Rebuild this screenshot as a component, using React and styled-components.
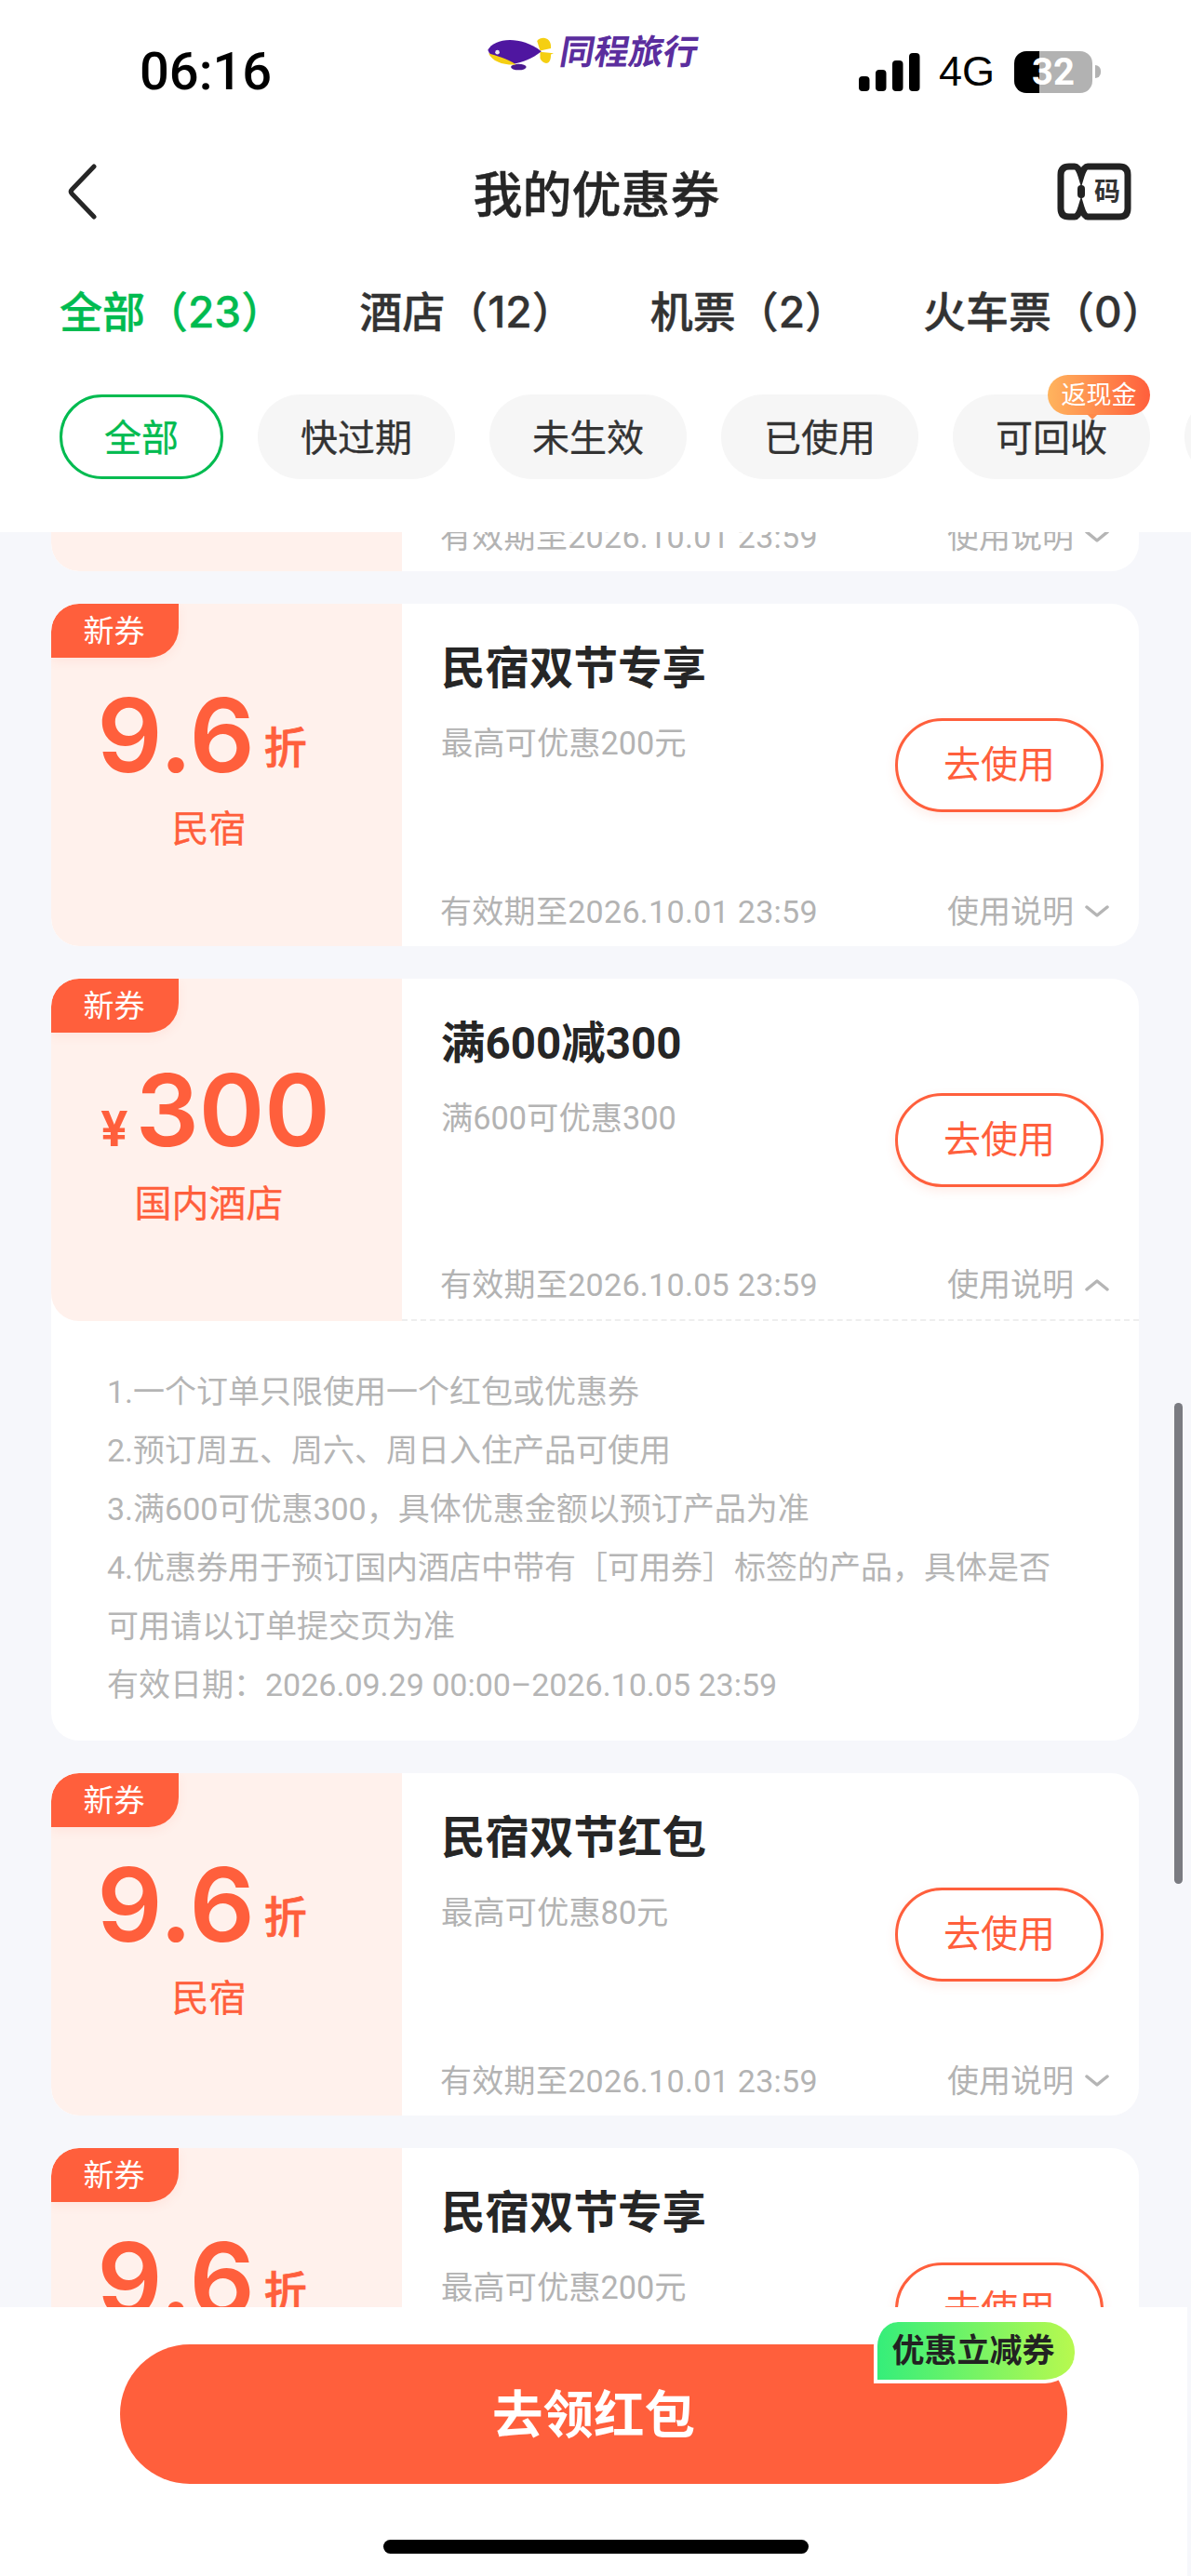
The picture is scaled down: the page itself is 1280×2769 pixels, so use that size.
import React from 'react'
import styled, { createGlobalStyle } from 'styled-components'

const GlobalStyle = createGlobalStyle`
  html, body {
    margin: 0;
    padding: 0;
    background: #f6f7fb;
    font-family: Roboto, "Noto Sans CJK SC", sans-serif;
  }
  * { box-sizing: border-box; }
`

const ORANGE = '#ff5f3c'

const Page = styled.div`
  width: 1280px;
  height: 2769px;
  display: flex;
  flex-direction: column;
  overflow: hidden;
  background: #f6f7fb;
`

const Header = styled.header`
  height: 572px;
  flex: none;
  background: #fff;
`

const StatusBar = styled.div`
  height: 152px;
  display: flex;
  align-items: center;
  padding: 2px 97px 0 150px;
`

const Time = styled.div`
  width: 372px;
  font-size: 56px;
  font-weight: 500;
  color: #000;
`

const Logo = styled.div`
  align-self: flex-start;
  margin-top: 34px;
  display: flex;
  align-items: center;
  gap: 6px;
`

const LogoText = styled.span`
  font-size: 37px;
  line-height: 42px;
  font-weight: 700;
  color: #5b2e9e;
  display: inline-block;
  transform: skewX(-10deg);
`

const StatusRight = styled.div`
  margin-left: auto;
  display: flex;
  align-items: center;
`

const Net = styled.span`
  margin: 0 21px 0 20px;
  font-family: "Liberation Sans", sans-serif;
  font-size: 45px;
  color: #000;
`

const Battery = styled.div`
  width: 84px;
  height: 45px;
  border-radius: 13px;
  background: linear-gradient(90deg, #000 32%, #b2b2b2 32%);
  color: #fff;
  font-size: 40px;
  font-weight: 700;
  line-height: 45px;
  text-align: center;
`

const BatteryNub = styled.div`
  width: 6px;
  height: 14px;
  margin-left: 3px;
  border-radius: 0 7px 7px 0;
  background: #b2b2b2;
`

const NavBar = styled.div`
  height: 108px;
  display: grid;
  grid-template-columns: 1fr auto 1fr;
  align-items: center;
  padding: 0 64px 0 72px;
  & > :last-child {
    justify-self: end;
  }
`

const NavTitle = styled.h1`
  margin: 0 0 0 -6px;
  font-size: 53px;
  font-weight: 500;
  color: #262626;
  -webkit-text-stroke: 0.4px #262626;
`

const Tabs = styled.div`
  display: flex;
  gap: 81px;
  padding: 44px 0 0 64px;
  height: 122px;
  white-space: nowrap;
`

const Tab = styled.div`
  font-family: Inter, "Noto Sans CJK SC", sans-serif;
  font-size: 46px;
  line-height: 62px;
  font-weight: 500;
  color: ${p => (p.$active ? '#00bb50' : '#333')};
  -webkit-text-stroke: 0.4px ${p => (p.$active ? '#00bb50' : '#333')};
`

const Chips = styled.div`
  display: flex;
  gap: 37px;
  padding-left: 64px;
  margin-top: 42px;
`

const Chip = styled.div`
  position: relative;
  flex: none;
  width: ${p => (p.$active ? '176px' : '212px')};
  height: 91px;
  padding-bottom: 3px;
  border-radius: 46px;
  display: flex;
  align-items: center;
  justify-content: center;
  font-size: 40px;
  color: ${p => (p.$active ? '#00bb50' : '#333')};
  background: ${p => (p.$active ? '#fff' : '#f6f6f6')};
  border: ${p => (p.$active ? '3px solid #00bb50' : 'none')};
  -webkit-text-stroke: 0.3px ${p => (p.$active ? '#00bb50' : '#333')};
`

const CashBadge = styled.span`
  position: absolute;
  top: -21px;
  right: 0;
  width: 110px;
  height: 43px;
  border-radius: 22px;
  background: linear-gradient(90deg, #ffb45e, #ff5f3c);
  color: #fff;
  font-size: 27px;
  line-height: 44px;
  text-align: center;
  -webkit-text-stroke: 0;
  &::after {
    content: '';
    position: absolute;
    left: 42px;
    top: 42px;
    border: 6px solid transparent;
    border-top-color: #ff8a4a;
    border-bottom-width: 0;
  }
`

const Scroll = styled.main`
  position: relative;
  flex: 1;
  min-height: 0;
  overflow: hidden;
`

const ScrollThumb = styled.div`
  position: absolute;
  top: 936px;
  right: 9px;
  width: 9px;
  height: 517px;
  border-radius: 5px;
  background: #7a7b81;
`

const List = styled.div`
  margin-top: -326px;
  padding: 0 56px 0 55px;
  display: flex;
  flex-direction: column;
  gap: 35px;
`

const Card = styled.article`
  background: #fff;
  border-radius: 30px;
  overflow: hidden;
`

const Ticket = styled.div`
  display: flex;
  height: 368px;
`

const Left = styled.div`
  position: relative;
  width: 377px;
  flex: none;
  padding: 91px 38px 0 0;
  background: #fff1ec;
  border-radius: 30px 0 0 30px;
  display: flex;
  flex-direction: column;
  align-items: center;
  color: ${ORANGE};
`

const NewTag = styled.span`
  position: absolute;
  top: 0;
  left: 0;
  width: 137px;
  height: 58px;
  padding-right: 2px;
  border-radius: 30px 0 32px 0;
  background: ${ORANGE};
  box-shadow: 0 4px 12px rgba(255, 95, 60, 0.08);
  color: #fff;
  font-size: 33px;
  line-height: 60px;
  text-align: center;
`

const Amount = styled.div`
  height: 100px;
  display: flex;
  align-items: baseline;
  font-family: Inter, sans-serif;
  font-weight: 600;
  font-size: ${p => (p.$cash ? '107px' : '110px')};
  line-height: 100px;
  white-space: nowrap;
  margin: ${p => (p.$cash ? '0 0 0 14px' : '0 15px 0 0')};
`

const Currency = styled.span`
  font-size: 52px;
  font-weight: 700;
  margin-right: 8px;
`

const Unit = styled.span`
  font-family: Roboto, "Noto Sans CJK SC", sans-serif;
  font-size: 46px;
  font-weight: 500;
  margin-left: 10px;
  transform: translateY(-10px);
  -webkit-text-stroke: 0.7px ${ORANGE};
`

const Scope = styled.div`
  margin-top: 28px;
  font-size: 40px;
  line-height: 48px;
  -webkit-text-stroke: 0.3px ${ORANGE};
`

const Right = styled.div`
  flex: 1;
  min-width: 0;
  display: flex;
  flex-direction: column;
  padding: 0 32px 17px 42px;
  border-bottom: ${p => (p.$open ? '2px dashed #eeeeee' : 'none')};
`

const Main = styled.div`
  display: flex;
  justify-content: space-between;
`

const Title = styled.h2`
  margin: 40px 0 0;
  font-size: 47.5px;
  line-height: 60px;
  font-weight: 700;
  color: #262626;
`

const Sub = styled.div`
  margin-top: 30px;
  font-size: 34.3px;
  line-height: 40px;
  color: #b3b3b3;
`

const UseButton = styled.button`
  margin: 123px 6px 0 0;
  width: 224px;
  height: 101px;
  border-radius: 51px;
  border: 3px solid ${ORANGE};
  background: #fff;
  box-shadow: 0 4px 12px rgba(255, 95, 60, 0.12);
  font-family: inherit;
  font-size: 40px;
  color: ${ORANGE};
  padding: 0 0 8px;
`

const CardFoot = styled.div`
  margin-top: auto;
  display: flex;
  justify-content: space-between;
  align-items: center;
  font-size: 34px;
  line-height: 40px;
  color: #b3b3b3;
`

const Until = styled.span`
  margin-left: -1px;
  letter-spacing: 0.3px;
`

const Help = styled.span`
  display: flex;
  align-items: center;
  gap: 12px;
`

const Notes = styled.div`
  padding: 45px 70px 28px 60px;
  font-size: 34px;
  line-height: 63px;
  color: #b5b5b5;
`

const BottomBar = styled.footer`
  height: 289px;
  flex: none;
  margin-right: 4px;
  padding-top: 40px;
  background: #fff;
`

const Cta = styled.div`
  position: relative;
  margin-left: 129px;
  width: 1018px;
  height: 150px;
  padding-bottom: 8px;
  border-radius: 75px;
  background: ${ORANGE};
  color: #fff;
  font-size: 54.5px;
  font-weight: 700;
  display: flex;
  align-items: center;
  justify-content: center;
`

const CtaBadge = styled.span`
  position: absolute;
  top: -24px;
  left: 810px;
  width: 216px;
  height: 66px;
  padding-right: 6px;
  border-left: 4px solid #fff;
  border-bottom: 4px solid #fff;
  border-radius: 26px 32px 32px 0;
  background: linear-gradient(90deg, #35ee7a, #b8f94f);
  color: #222;
  font-size: 35px;
  font-weight: 700;
  line-height: 64px;
  text-align: center;
`

const HomeBar = styled.div`
  width: 457px;
  height: 15px;
  margin: 60px 0 0 412px;
  border-radius: 8px;
  background: #000;
`

const BlimpLogo = () => (
  <svg width="74" height="39" viewBox="64 50 222 118">
    <path d="M230 68C245 50 278 56 275 92L240 100Z" fill="#f5cf12" />
    <path d="M240 125C250 146 276 150 275 112L284 108L240 104Z" fill="#f5cf12" />
    <ellipse cx="170" cy="153" rx="25" ry="10" fill="#4a1a90" />
    <path d="M70 98C90 60 172 48 244 102C214 126 184 136 152 144C110 140 80 126 70 98Z" fill="#4f16a0" />
    <path d="M72 108C96 116 132 124 162 145C120 147 86 136 72 108Z" fill="#f5cf12" />
    <circle cx="101" cy="105" r="7" fill="#e8e4f2" />
  </svg>
)

const SignalIcon = () => (
  <svg width="66" height="41" viewBox="0 0 66 41" fill="#000">
    <rect x="0" y="25" width="11.5" height="16" rx="4" />
    <rect x="18" y="18" width="11.5" height="23" rx="4" />
    <rect x="36" y="8" width="11.5" height="33" rx="4" />
    <rect x="54" y="0" width="11.5" height="41" rx="4" />
  </svg>
)

const BackIcon = () => (
  <svg width="32" height="60" viewBox="0 0 32 60" fill="none">
    <path d="M29 3L5.5 27.5Q3 30 5.5 32.5L29 57" stroke="#262626" strokeWidth="5" strokeLinecap="round" strokeLinejoin="round" />
  </svg>
)

const CodeIcon = () => (
  <svg width="80" height="62" viewBox="0 0 80 62" fill="none">
    <path
      d="M13 4H19Q23 4 26 14Q29 4 33 4H67Q76 4 76 13V49Q76 58 67 58H33Q29 58 26 48Q23 58 19 58H13Q4 58 4 49V13Q4 4 13 4Z"
      stroke="#222"
      strokeWidth="7"
    />
    <rect x="22" y="24" width="8" height="14" rx="4" fill="#222" />
    <text x="54" y="41" textAnchor="middle" fontSize="28" fontWeight="700" fill="#333" fontFamily="Noto Sans CJK SC, sans-serif">码</text>
  </svg>
)

const Chevron = ({ up }) => (
  <svg width="26" height="14" viewBox="0 0 26 14" fill="none">
    <path d={up ? 'M2 12L13 3L24 12' : 'M2 2L13 11L24 2'} stroke="#b5b5b5" strokeWidth="3.5" strokeLinecap="round" strokeLinejoin="round" />
  </svg>
)

const tabs = ['全部（23）', '酒店（12）', '机票（2）', '火车票（0）']
const chips = ['全部', '快过期', '未生效', '已使用', '可回收', '']

const coupons = [
  { id: 1, value: '9.6', kind: 'discount', scope: '民宿', title: '民宿双节专享', sub: '最高可优惠200元', until: '2026.10.01 23:59' },
  { id: 2, value: '9.6', kind: 'discount', scope: '民宿', title: '民宿双节专享', sub: '最高可优惠200元', until: '2026.10.01 23:59' },
  {
    id: 3,
    value: '300',
    kind: 'cash',
    scope: '国内酒店',
    title: '满600减300',
    sub: '满600可优惠300',
    until: '2026.10.05 23:59',
    notes: [
      '1.一个订单只限使用一个红包或优惠券',
      '2.预订周五、周六、周日入住产品可使用',
      '3.满600可优惠300，具体优惠金额以预订产品为准',
      '4.优惠券用于预订国内酒店中带有［可用券］标签的产品，具体是否可用请以订单提交页为准',
      '有效日期：2026.09.29 00:00–2026.10.05 23:59',
    ],
  },
  { id: 4, value: '9.6', kind: 'discount', scope: '民宿', title: '民宿双节红包', sub: '最高可优惠80元', until: '2026.10.01 23:59' },
  { id: 5, value: '9.6', kind: 'discount', scope: '民宿', title: '民宿双节专享', sub: '最高可优惠200元', until: '2026.10.01 23:59' },
]

const Coupon = ({ item }) => (
  <Card>
    <Ticket>
      <Left>
        <NewTag>新券</NewTag>
        <Amount $cash={item.kind === 'cash'}>
          {item.kind === 'cash' && <Currency>¥</Currency>}
          {item.value}
          {item.kind === 'discount' && <Unit>折</Unit>}
        </Amount>
        <Scope>{item.scope}</Scope>
      </Left>
      <Right $open={!!item.notes}>
        <Main>
          <div>
            <Title>{item.title}</Title>
            <Sub>{item.sub}</Sub>
          </div>
          <UseButton>去使用</UseButton>
        </Main>
        <CardFoot>
          <Until>有效期至{item.until}</Until>
          <Help>使用说明<Chevron up={!!item.notes} /></Help>
        </CardFoot>
      </Right>
    </Ticket>
    {item.notes && (
      <Notes>
        {item.notes.map(n => <div key={n}>{n}</div>)}
      </Notes>
    )}
  </Card>
)

const App = () => {
  return (
    <Page>
      <GlobalStyle />
      <Header>
        <StatusBar>
          <Time>06:16</Time>
          <Logo>
            <BlimpLogo />
            <LogoText>同程旅行</LogoText>
          </Logo>
          <StatusRight>
            <SignalIcon />
            <Net>4G</Net>
            <Battery>32</Battery>
            <BatteryNub />
          </StatusRight>
        </StatusBar>
        <NavBar>
          <BackIcon />
          <NavTitle>我的优惠券</NavTitle>
          <CodeIcon />
        </NavBar>
        <Tabs>
          {tabs.map((t, i) => <Tab key={t} $active={i === 0}>{t}</Tab>)}
        </Tabs>
        <Chips>
          {chips.map((c, i) => (
            <Chip key={c || i} $active={i === 0}>
              {c}
              {c === '可回收' && <CashBadge>返现金</CashBadge>}
            </Chip>
          ))}
        </Chips>
      </Header>
      <Scroll>
        <List>
          {coupons.map(c => <Coupon key={c.id} item={c} />)}
        </List>
        <ScrollThumb />
      </Scroll>
      <BottomBar>
        <Cta>
          去领红包
          <CtaBadge>优惠立减券</CtaBadge>
        </Cta>
        <HomeBar />
      </BottomBar>
    </Page>
  )
}

export default App
